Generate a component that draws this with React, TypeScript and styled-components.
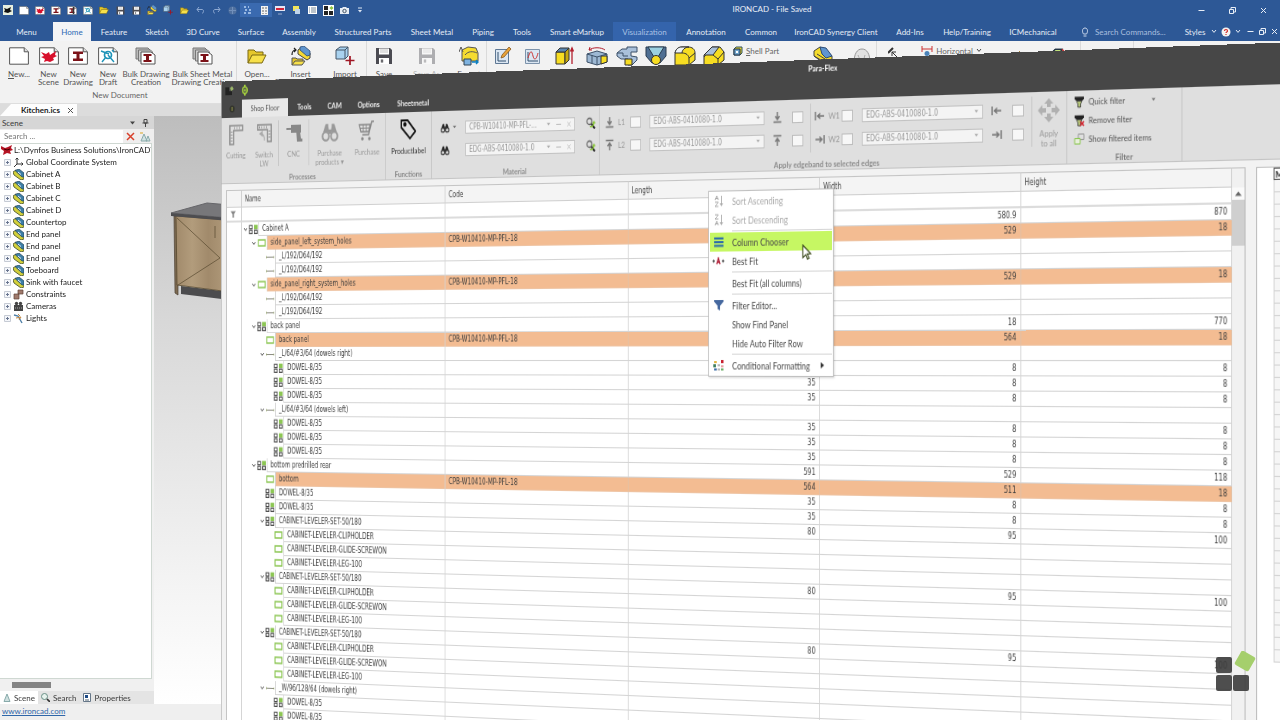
import React from "react";
import styled, { createGlobalStyle, css } from "styled-components";

const UI = `Lato, "Open Sans", "Liberation Sans", sans-serif`;
const GRID = `"DejaVu Sans Condensed", "DejaVu Sans", "Liberation Sans", sans-serif`;

const GlobalStyle = createGlobalStyle`
  *, *::before, *::after { box-sizing: border-box; }
  html, body, #root { height: 100%; }
  body { margin: 0; overflow: hidden; font-family: ${UI}; font-size: 8px; color: #3c3c3c; background: #f1f1f1; }
  button, input, select { font: inherit; color: inherit; margin: 0; padding: 0; border: 0; background: none; border-radius: 0; }
  svg { display: block; flex: none; }
`;

/* ---------- host application ---------- */

const Stage = styled.div`
  position: relative;
  display: flex;
  flex-direction: column;
  height: 100vh;
  overflow: hidden;
  perspective: 6000px;
  perspective-origin: 50% 50%;
`;
const TitleBar = styled.header`
  display: flex;
  align-items: center;
  height: 22px;
  flex: none;
  padding: 0 1px 2px 0;
  background: #2d5896;
  color: #e9eef6;
`;
const QuickTools = styled.div`
  display: flex;
  align-items: center;
`;
const QuickButton = styled.button<{ $on?: boolean }>`
  display: flex;
  justify-content: center;
  align-items: center;
  width: 16px;
  height: 14px;
  background: ${(p) => (p.$on ? "#3a6ab0" : "none")};
`;
const AppTitle = styled.div`
  flex: 1;
  text-align: center;
  line-height: 12px;
  padding: 0 10px 3px 0;
`;
const WindowButton = styled.button`
  display: flex;
  justify-content: center;
  align-items: center;
  width: 31px;
  height: 18px;
`;
const MenuBar = styled.nav`
  display: flex;
  height: 19px;
  flex: none;
  background: #2d5896;
`;
const MenuTab = styled.button<{ $w: number; $kind?: "active" | "lit" }>`
  width: ${(p) => p.$w}px;
  flex: none;
  white-space: nowrap;
  color: #e4ebf5;
  ${(p) => p.$kind === "active" && css`background: #f3f4f6; color: #2c68b4;`}
  ${(p) => p.$kind === "lit" && css`background: #3464ac; color: #a9c0e4;`}
`;
const CommandSearch = styled.label`
  display: flex;
  align-items: center;
  gap: 6px;
  padding-left: 15px;
  flex: 1;
  input { width: 80px; color: #a9bfdf; }
  input::placeholder { color: #a9bfdf; opacity: 1; }
`;
const MenuBarEnd = styled.div`
  display: flex;
  align-items: center;
  color: #e4ebf5;
  button { display: flex; justify-content: center; align-items: center; width: 12px; height: 18px; }
  button:first-child { width: 26px; }
`;
const HostRibbon = styled.div`
  display: flex;
  height: 63px;
  flex: none;
  background: #f2f2f2;
  border-bottom: 1px solid #dedede;
`;
const HostGroup = styled.section<{ $pad?: number; $end?: number }>`
  display: flex;
  flex-direction: column;
  flex: none;
  padding-left: ${(p) => p.$pad ?? 0}px;
  padding-right: ${(p) => p.$end ?? 0}px;
  border-right: 1px solid #dadada;
`;
const HostRow = styled.div`
  display: flex;
  flex: 1;
`;
const HostCaption = styled.div`
  height: 15px;
  line-height: 15px;
  text-align: center;
  color: #666;
`;
const HostButton = styled.button<{ $w: number; $off?: boolean }>`
  display: flex;
  flex-direction: column;
  align-items: center;
  width: ${(p) => p.$w}px;
  padding-top: 5px;
  line-height: 8px;
  color: #555;
  opacity: ${(p) => (p.$off ? 0.4 : 1)};
  svg { height: 20px; }
  span { margin-top: 4px; white-space: nowrap; }
`;
const HostSmall = styled.button<{ $before: number; $after?: number }>`
  display: flex;
  align-items: center;
  gap: 3px;
  height: 19px;
  padding: 0 ${(p) => p.$after ?? 0}px 0 ${(p) => p.$before}px;
  white-space: nowrap;
  color: #666;
`;
const DocTabs = styled.div`
  display: flex;
  height: 12px;
  flex: none;
  background: #dcdcdc;
`;
const DocTab = styled.button`
  display: flex;
  align-items: center;
  gap: 7px;
  width: 77px;
  padding-left: 21px;
  font-weight: 700;
  color: #222;
  background: #fdfdfd;
  clip-path: polygon(11px 0, 100% 0, 100% 100%, 0 100%);
`;
const Main = styled.div`
  display: flex;
  flex: 1;
  min-height: 0;
`;
const ScenePanel = styled.aside`
  display: flex;
  flex-direction: column;
  width: 154px;
  flex: none;
  background: #f0f0f0;
`;
const PanelHead = styled.div`
  display: flex;
  align-items: center;
  justify-content: space-between;
  height: 13px;
  padding: 0 5px 0 2px;
  background: #d6d6d6;
  div { display: flex; gap: 6px; align-items: center; }
`;
const SceneSearch = styled.div`
  display: flex;
  align-items: center;
  height: 14px;
  background: #efeeee;
  input { width: 123px; height: 13px; padding-left: 4px; background: #fff; }
  input::placeholder { color: #777; opacity: 1; }
  button { display: flex; justify-content: center; align-items: center; width: 15px; height: 14px; }
`;
const SceneTree = styled.ul`
  flex: 1;
  margin: 0 2px 0 0;
  padding: 0 0 0 1px;
  list-style: none;
  background: #fff;
  border: 1px solid #cfd8d2;
  border-left: 0;
  overflow: hidden;
`;
const SceneItem = styled.li<{ $root?: boolean }>`
  display: flex;
  align-items: center;
  gap: ${(p) => (p.$root ? 1 : 2)}px;
  height: 12px;
  padding-left: ${(p) => (p.$root ? 0 : 3)}px;
  white-space: nowrap;
  color: #222;
`;
const HScroll = styled.div`
  height: 12px;
  padding: 3px 12px;
  &::before { content: ""; display: block; width: 39px; height: 6px; background: #848484; }
`;
const PanelTabs = styled.div`
  display: flex;
  height: 13px;
  background: #e4e4e4;
`;
const PanelTab = styled.button<{ $on?: boolean }>`
  display: flex;
  align-items: center;
  gap: 3px;
  padding: 0 3px;
  background: ${(p) => (p.$on ? "#fff" : "none")};
`;
const Viewport = styled.div`
  flex: 1;
  background: linear-gradient(#bdbdbd, #d8d8d8 35%, #f4f4f4 80%, #fff);
  padding-top: 84px;
  padding-left: 16px;
`;
const StatusBar = styled.footer`
  height: 16px;
  flex: none;
  padding-left: 2px;
  line-height: 15px;
  background: #efefef;
  a { color: #2f66a8; }
`;

/* ---------- tilted Para-Flex window ---------- */

const FlexWindow = styled.section`
  position: absolute;
  z-index: 2;
  left: 189px;
  right: -180px;
  top: 78px;
  bottom: -30px;
  display: flex;
  flex-direction: column;
  background: #f2f2f2;
  border-left: 1px solid #b5b5b5;
  transform-origin: 131px 50%;
  transform: rotateY(-37deg);
  overflow: hidden;
`;
const FlexTitle = styled.header`
  display: flex;
  align-items: center;
  height: 19px;
  flex: none;
  background: #474747;
  color: #fff;
  font-weight: 700;
  padding-left: 4px;
  h1 { flex: 1; margin: 0; padding: 0 0 4px 182px; text-align: center; font-size: 8px; }
`;
const FlexTabs = styled.nav`
  display: flex;
  height: 18px;
  flex: none;
  background: #474747;
`;
const FlexTab = styled.button<{ $w: number; $on?: boolean }>`
  width: ${(p) => p.$w}px;
  display: flex;
  justify-content: center;
  align-items: center;
  font-weight: ${(p) => (p.$on ? 400 : 700)};
  color: ${(p) => (p.$on ? "#555" : "#f0f0f0")};
  background: ${(p) => (p.$on ? "#e9e9e9" : "none")};
`;
const FlexRibbon = styled.div`
  display: flex;
  height: 67px;
  flex: none;
  background: #dfdfdf;
  border-bottom: 1px solid #c4c4c4;
`;
const FlexGroup = styled.section<{ $w: number }>`
  display: flex;
  flex-direction: column;
  width: ${(p) => p.$w}px;
  flex: none;
  border-right: 1px solid #c6c6c6;
`;
const GroupBody = styled.div`
  display: flex;
  flex: 1;
`;
const GroupLabel = styled.div<{ $plain?: boolean }>`
  height: 9px;
  line-height: 9px;
  text-align: center;
  font-weight: 700;
  color: ${(p) => (p.$plain ? "#777" : "#8b8b8b")};
`;
const BigTool = styled.button<{ $w: number; $live?: boolean }>`
  display: flex;
  flex-direction: column;
  align-items: center;
  gap: 6px;
  width: ${(p) => p.$w}px;
  padding-top: 6px;
  line-height: 9px;
  color: ${(p) => (p.$live ? "#333" : "#999")};
  span { white-space: nowrap; height: 18px; }
`;
const Rule = styled.i`
  width: 1px;
  margin: 4px 0 7px;
  background: #c6c6c6;
`;
const MaterialGrid = styled.div`
  display: grid;
  grid-template-columns: 20px 16px 146px 18px;
  grid-auto-rows: 22px;
  align-content: start;
  align-items: center;
  padding: 5px 0 0 6px;
  button { display: flex; justify-content: center; }
`;
const Lookup = styled.div`
  display: flex;
  align-items: center;
  gap: 7px;
  width: 136px;
  height: 13px;
  padding: 0 4px;
  color: #999;
  background: #f4f4f4;
  border: 1px solid #c2c2c2;
  font-family: ${GRID};
  input { flex: 1; min-width: 0; height: 11px; }
`;
const EdgeGrid = styled.div<{ $pad: number }>`
  display: grid;
  grid-template-columns: 16px 15px 23px 145px 23px 13px;
  grid-auto-rows: 22px;
  align-content: start;
  align-items: center;
  padding: 5px 8px 0 ${(p) => p.$pad}px;
  color: #999;
`;
const Check = styled.input`
  appearance: none;
  width: 13px;
  height: 11px;
  background: #f7f7f7;
  border: 1px solid #bdbdbd;
`;
const Picker = styled.div`
  display: flex;
  align-items: center;
  width: 136px;
  height: 13px;
  padding-right: 4px;
  background: #f4f4f4;
  border: 1px solid #c2c2c2;
  font-family: ${GRID};
  select { flex: 1; appearance: none; height: 11px; padding-left: 4px; line-height: 11px; color: #999; }
`;
const FilterList = styled.div`
  display: flex;
  flex-direction: column;
  padding: 1px 0 0 7px;
`;
const FilterButton = styled.button`
  display: flex;
  align-items: center;
  gap: 4px;
  height: 17px;
  color: #555;
  svg:last-child:not(:first-child) { margin-left: 24px; }
`;
const FlexBody = styled.div`
  display: flex;
  flex: 1;
  min-height: 0;
  padding: 6px 0 0 6px;
`;
const TableWrap = styled.div`
  flex: 1;
  min-width: 0;
  overflow: hidden;
  background: #fff;
`;
const Table = styled.table`
  width: 100%;
  table-layout: fixed;
  border-collapse: separate;
  border-spacing: 0;
  font-family: ${GRID};
  line-height: 13px;
  border-left: 1px solid #c4c4c4;
`;
const HeadCell = styled.th`
  height: 18px;
  padding: 0 4px;
  font-weight: 400;
  text-align: left;
  color: #444;
  background: #f4f4f4;
  border-top: 1px solid #c4c4c4;
  border-right: 1px solid #cfcfcf;
  border-bottom: 1px solid #cfcfcf;
`;
const FilterCell = styled.td`
  height: 15px;
  padding: 0 5px;
  border-right: 1px solid #d4d4d4;
  border-bottom: 2px solid #dcdcdc;
`;
const Gutter = styled.td`
  padding: 0;
  border-right: 1px solid #d4d4d4;
`;
const NameCell = styled.td`
  height: 14px;
  padding: 0;
  border-right: 1px solid #d4d4d4;
`;
const NameLine = styled.div<{ $level: number }>`
  display: flex;
  height: 14px;
  padding-left: ${(p) => 1 + p.$level * 11}px;
`;
const Mark = styled.span<{ $w: number }>`
  display: flex;
  align-items: center;
  justify-content: center;
  width: ${(p) => p.$w}px;
  flex: none;
`;
const NameText = styled.span<{ $hot?: boolean }>`
  flex: 1;
  padding-left: 4px;
  white-space: nowrap;
  border-left: 1px solid #d4d4d4;
  border-bottom: 1px solid ${(p) => (p.$hot ? "#eec3a2" : "#d4d4d4")};
  background: ${(p) => (p.$hot ? "#f3bc92" : "#fff")};
`;
const DataCell = styled.td<{ $hot?: boolean; $num?: boolean }>`
  height: 14px;
  padding: 0 4px;
  white-space: nowrap;
  text-align: ${(p) => (p.$num ? "right" : "left")};
  background: ${(p) => (p.$hot ? "#f3bc92" : "#fff")};
  border-right: 1px solid ${(p) => (p.$hot ? "#e3c0a4" : "#d4d4d4")};
  border-bottom: 1px solid ${(p) => (p.$hot ? "#eec3a2" : "#d4d4d4")};
`;
const VScroll = styled.div`
  display: flex;
  flex-direction: column;
  width: 14px;
  flex: none;
  background: #f1f1f1;
  border-top: 1px solid #c4c4c4;
  border-right: 1px solid #b8b8b8;
  button { display: flex; align-items: center; justify-content: center; height: 11px; margin-top: 17px; background: #fafafa; }
  i { height: 41px; background: #cfcfcf; }
`;
const SideView = styled.div`
  width: 52px;
  flex: none;
  margin-left: 11px;
  padding-left: 17px;
  background: #fff;
  border-left: 1px solid #b8b8b8;
  border-top: 1px solid #c4c4c4;
`;
const SideHead = styled.div`
  height: 11px;
  line-height: 10px;
  padding-left: 1px;
  font-weight: 700;
  color: #111;
  border: 1px solid #555;
`;
const SideRow = styled.div`
  height: 11px;
  background: #f6f6f6;
  border: 1px solid #d4d4d4;
  border-top: 0;
`;

/* ---------- context menu ---------- */

const Menu = styled.div`
  position: absolute;
  left: 612px;
  top: 121px;
  width: 146px;
  padding: 0 1px 1px;
  font-size: 9px;
  background: #fff;
  border: 1px solid #c0c0c0;
  box-shadow: 1px 1px 2px rgba(0, 0, 0, 0.15);
`;
const MenuItem = styled.button<{ $off?: boolean; $on?: boolean }>`
  display: flex;
  align-items: center;
  width: 100%;
  height: 18px;
  color: ${(p) => (p.$off ? "#a9a9a9" : "#4a4a4a")};
  background: ${(p) => (p.$on ? "#c6f763" : "none")};
  i { display: flex; justify-content: center; width: 20px; margin-right: 6px; }
  span + svg { margin-left: 12px; }
`;
const Separator = styled.hr`
  height: 1px;
  margin: 1px 0 1px 26px;
  border: 0;
  background: #d6d6d6;
`;
const Pointer = styled.svg`
  position: absolute;
  left: 721px;
  top: 173px;
`;
const Watermark = styled.svg`
  position: absolute;
  z-index: 3;
  right: 23px;
  bottom: 28px;
`;

/* ---------- drawings ---------- */

const S = ({ w = 20, h = w, vb, children }: { w?: number; h?: number; vb?: string; children: React.ReactNode }) => (
  <svg width={w} height={h} viewBox={vb ?? `0 0 ${w} ${h}`} fill="none" aria-hidden="true">{children}</svg>
);
const Caret = ({ c = "#777", w = 5 }) => <S w={w} h={4} vb="0 0 6 4"><path d="M0.5 0.5h5L3 3.5z" fill={c} /></S>;
const Chevron = ({ c = "#444" }) => <S w={6} h={5}><path d="M1 1l2 2.4L5 1" stroke={c} strokeWidth="1" /></S>;
const Page = ({ w = 20, children }: { w?: number; children?: React.ReactNode }) => (
  <S w={w} h={Math.round(w * 0.9)} vb="0 0 20 18">
    <path d="M.6.8h14.6l4.2 4v12.4H.6z" fill="#fff" stroke="#555" />
    <path d="M15.2.8v4h4.2" stroke="#555" fill="#ddd" />
    {children}
  </S>
);
const Bat = () => <path d="M2 5l5 2 3-2 1 3 6-4-1 4 2 1-4 2 1 2-4 2-3-1-3 1 1-3-4-2 3-1z" fill="#d8102c" />;
const Beam = () => <path d="M5 4.5h10V7h-3.5v4.5H15V14H5v-2.5h3.5V7H5z" fill="#7c1218" />;
const Draft = () => <g><circle cx="10" cy="8" r="3.5" stroke="#1d93b8" strokeWidth="1.7" /><path d="M3 4l8 3M8 10l-4 5M10 8l6 7M14 3l2 2" stroke="#1d93b8" strokeWidth="1.4" /></g>;
const Bulk = () => (
  <S w={22} h={18}>
    <path d="M1 1h12l2 2v9H1z" fill="#bbb" stroke="#777" /><path d="M3.5 3h12l2 2v9h-14z" fill="#ccc" stroke="#777" />
    <path d="M6 5h10l4 3v9H6z" fill="#fff" stroke="#555" /><path d="M8.5 7h8v2H14v4h2.5v2h-8v-2H11V9H8.5z" fill="#7c1218" />
  </S>
);
const Folder = ({ w = 20 }: { w?: number }) => (
  <S w={w} vb="0 0 20 20"><path d="M1 17V4h6l2 2h7v3" fill="#e5c72c" stroke="#7a6812" /><path d="M1 17l4-8h14l-4 8z" fill="#f7e04a" stroke="#7a6812" /></S>
);
const Blocks = ({ w = 20 }: { w?: number }) => (
  <S w={w} vb="0 0 20 20">
    <path d="M7 4l4-3 8 6v5l-3 2-9-6z" fill="#f4d835" stroke="#444" /><path d="M9 1l4-1 6 5v4l-3 1-7-6z" fill="#5f95cf" stroke="#2c4b74" strokeWidth=".8" />
    <path d="M1 19v-7h4l1 1h6v2" fill="#e5c72c" stroke="#555" /><path d="M1 19l3-4h10l-3 4z" fill="#f7e04a" stroke="#555" />
    <path d="M1 9c0-4 1-5 4-5M3 2l2 2-2 2" stroke="#222" strokeWidth="1.2" />
  </S>
);
const PartBlock = () => (
  <S w={20}>
    <path d="M1 5l6-4 12 9v6l-6 3L1 10z" fill="#f4dc2c" stroke="#444" />
    <path d="M7 1l6 1 6 8-6 2-4-4z" fill="#5f95cf" stroke="#2c4b74" /><path d="M1 10l12 7v2M4 8l8 5" stroke="#444" />
  </S>
);
const ImportIcon = ({ w = 20 }: { w?: number }) => (
  <S w={w} vb="0 0 20 20"><path d="M1 4l4-3h8v9l-3 3H1z" fill="#a9d2ef" stroke="#456" /><path d="M1 4h9v9M10 4l3-3" stroke="#456" /><path d="M15 10v9M10.5 14.5h9" stroke="#a01624" strokeWidth="1.7" /></S>
);
const Disk = ({ w = 18 }: { w?: number }) => (
  <S w={w} vb="0 0 18 18"><path d="M1 1h14l2 2v14H1z" fill="#4b4b52" /><path d="M4 1.5h10v6H4zM4 11h10v6H4z" fill="#fff" /><path d="M6 12.5h2v3H6zM5 3h8M5 5h8" fill="#4b4b52" stroke="#aaa" strokeWidth=".7" /></S>
);
const ExportIcon = () => (
  <S w={20}><path d="M3 4l6-3 8 1 2 5v8H3z" fill="#f6dc30" stroke="#555" /><path d="M6 9c3-4 8-4 12-2" stroke="#555" /><path d="M5 13h7v6H5z" fill="#7fb3e0" stroke="#345" /><path d="M13 16h6m-2-2l2 2-2 2" stroke="#0d7fc1" strokeWidth="1.4" /><path d="M0 6l2-5 2 5" stroke="#555" /></S>
);
const Sketch2D = () => (
  <S w={18} h={20}><path d="M1.5 3.5h13v14h-13z" fill="#dbe6f2" stroke="#5f7894" /><path d="M4 6v9h8" stroke="#33506f" /><path d="M7 12l1-3 7-8 2 2-7 8z" fill="#e8a33a" stroke="#7b4b12" strokeWidth=".7" /></S>
);
const Graph = () => (
  <S w={18} h={20}><path d="M1.5 3.5h14v14h-14z" fill="#dbe6f2" stroke="#7d93ab" /><path d="M4 6v9h10" stroke="#33506f" /><path d="M4 12c3-10 4-6 5-2s3 5 5-3" stroke="#c33" /></S>
);
const Extrude = () => (
  <S w={20}><path d="M2 6v12h9V6z" fill="#f7dd22" stroke="#333" /><path d="M11 6l4-4v12l-4 4z" fill="#c6a90f" stroke="#333" /><path d="M2 6l4-4h9l-4 4z" fill="#5a86b0" stroke="#333" /><path d="M18 18V3m-1.5 2.5L18 2l1.5 3.5" stroke="#b3202e" strokeWidth="1.3" /></S>
);
const Spin = () => (
  <S w={22} h={20}><path d="M1 8l10-3 10 3v8l-10 3-10-3z" fill="#9db8d3" stroke="#3c5068" /><path d="M15 10h6v6l-6 2z" fill="#f7dd22" stroke="#333" /><path d="M1 8l10 3 10-3M11 11v8M6 9v8" stroke="#3c5068" /><path d="M3 4c4-3 12-3 16 0M3 4l1-3M3 4h3" stroke="#b3202e" /></S>
);
const Sweep = () => (
  <S w={22} h={20}><path d="M1 7l5-4h5V1h10v5h-6v4l6 1v3l-5 5h-4v-6H5L1 10z" fill="#a9c0da" stroke="#3c5068" /><path d="M1 7h6v3h5" stroke="#3c5068" /><path d="M9 13h7v6H9z" fill="#f7dd22" stroke="#333" /></S>
);
const Loft = () => (
  <S w={22} h={20}><path d="M1 1h20v9l-6 7H7L1 10z" fill="#4f6f93" stroke="#2b3c50" /><path d="M3 1h16l-6 10H9z" fill="#9bd0e0" stroke="#2b3c50" /><circle cx="11" cy="14" r="4.5" fill="#f7dd22" stroke="#333" /></S>
);
const Blend = ({ flat }: { flat?: boolean }) => (
  <S w={22} h={20}>
    {flat ? (
      <>
        <path d="M9 1h8l4 5v8l-6 5H1v-8z" fill="#f7dd22" stroke="#333" /><path d="M9 1h7l-6 8H1z" fill="#a9c0da" stroke="#333" /><path d="M1 9v2M10 9l5 4 6-7M15 13v6" stroke="#333" />
      </>
    ) : (
      <>
        <path d="M1 8v11h14l6-5V7c0-4-3-6-7-6H8C4 1 1 4 1 8z" fill="#f7dd22" stroke="#333" /><path d="M1 7c1-4 3-6 7-6h7c-4 0-7 3-7 6z" fill="#eef2f5" stroke="#333" /><path d="M8 7c4 0 7 2 7 6v6M15 12l6-5" stroke="#333" />
      </>
    )}
  </S>
);
const Shell = () => <S w={10}><path d="M1 3l2-2h6v6L7 9H1z" fill="#e3cf2b" stroke="#356" /><path d="M1 3h6v6H1z" fill="#6ea2c9" stroke="#234" /><path d="M3 5h2v2H3z" fill="#fff" /></S>;
const Helmet = () => <S w={18}><path d="M1 16c0-9 3-14 8-14s8 5 8 14z" fill="#e2e2e2" stroke="#999" /><path d="M5 8c1 3 2 3 2 8M12 8c-1 3-1 4-1 8M3 12h12" stroke="#aaa" /></S>;
const SmallCube = ({ w = 12 }: { w?: number }) => <S w={w} vb="0 0 12 12"><path d="M1 4l3-3h5v6l-2 4H1z" fill="#d9d33c" stroke="#234" /><path d="M1 4l3-3h5L7 4z" fill="#bfe07a" stroke="#234" /><path d="M9 1l2.5 2.5" stroke="#c33" /></S>;

const quick: React.ReactNode[] = [
  <S w={10}><path d="M0 0h10v10H0z" fill="#e8efdf" /><path d="M1 3l3 1 4-2-1 3 2 1-4 2-4-1 1-2z" fill="#111" /></S>,
  <Page w={10} />, <Page w={10}><Bat /></Page>, <Page w={10}><Beam /></Page>, <Page w={10}><Beam /><path d="M13 2v14" stroke="#333" strokeWidth="3" /></Page>,
  <Page w={10}><Draft /></Page>, <Folder w={10} />, <Disk w={9} />, <Disk w={9} />, <Blocks w={10} />, <ImportIcon w={10} />,
  <Folder w={9} />,
  <S w={9}><path d="M3 1L1 3.5 3 6M1 3.5h5c2 0 2 3 0 4" stroke="#8ea9d2" /></S>,
  <S w={9}><path d="M6 1l2 2.5L6 6M8 3.5H3c-2 0-2 3 0 4" stroke="#8ea9d2" /></S>,
  <S w={9}><circle cx="4.5" cy="4.5" r="4" fill="#51719f" /><path d="M1 4.5h7M4.5 1v7" stroke="#7290bb" /></S>,
  <S w={10}><path d="M1 2h2M5 2h1M2 5h2M6 5h2M1 8h2M5 8h3" stroke="#b8d2f4" strokeWidth="1.5" /></S>,
  <S w={9}><path d="M1 0h7v9H1z" fill="#f3f3f3" /><path d="M3 1v7M6 1v7" stroke="#666" strokeDasharray="2 1" /></S>,
  <S w={10}><path d="M0 1h10v5H0z" fill="#e6e6f4" /><path d="M1 3h8v2H1z" fill="#d2243a" /><path d="M3 9h4" stroke="#9ac" /></S>,
  <S w={10}><path d="M2 1h6v5H2z" fill="#f0e45a" /><path d="M4 4h5v5H4z" fill="#bfd4ea" /></S>,
  <S w={10}><path d="M1 1h9v8H1z" fill="#fff" /><path d="M2 3h7M2 5h7M2 7h7" stroke="#789" strokeDasharray="1 1 6" /></S>,
  <S w={11}><path d="M0 0h11v11H0z" fill="#fff" /><path d="M1 1h4v4H1zM1 6h4v4H1zM6 6h4v4H6z" fill="#222" /><path d="M6.5 3l2-2 2 2-2 2z" fill="#8cc63f" /></S>,
  <S w={9}><path d="M0 2h2l1-1h3l1 1h2v6H0z" fill="#e8eef6" /><circle cx="4.5" cy="5" r="1.7" stroke="#456" /></S>,
  <S w={6}><path d="M1 1h4" stroke="#dfe8f5" /><path d="M1 3h4L3 5.5z" fill="#dfe8f5" /></S>,
];

const WinMin = () => <S w={7}><path d="M0.5 3.5h6" stroke="#e8eef7" /></S>;
const WinRestore = () => <S w={7}><path d="M.5 2.5h4v4h-4zM2 2V.5h4.5V5H5" stroke="#e8eef7" /></S>;
const WinClose = ({ c = "#e8eef7" }) => <S w={7}><path d="M1 1l5 5M6 1L1 6" stroke={c} /></S>;

const PartIcon = () => (
  <S w={11}><path d="M0 3l3-2 8 6v3L8 11 1 6z" fill="#d2cf3a" stroke="#3f4a2a" strokeWidth=".8" /><path d="M2 1.5L6 0l5 4v4L9 8z" fill="#3d7ea6" stroke="#24465c" strokeWidth=".7" /><path d="M5 3l3 2.5" stroke="#e9f0ff" /></S>
);
const sceneIcon = (kind: string) => {
  if (kind === "axes") return <S w={11}><path d="M4 1v6h6M4 7L1 10M8.5 5.5L10 7 8.5 8.5M2.5 2.5L4 1l1.5 1.5" stroke="#333" /></S>;
  if (kind === "constraint") return <S w={11}><path d="M5 1h5v4H5zM1 5h5v5H1z" fill="#a07a6c" stroke="#5f4238" strokeWidth=".7" /></S>;
  if (kind === "camera") return <S w={11}><path d="M1 4h9v6H1z" fill="#444" /><circle cx="3.5" cy="2.5" r="1.7" fill="#444" /><circle cx="7.5" cy="2.5" r="1.7" fill="#444" /><path d="M2 7h7" stroke="#aaa" strokeDasharray="1" /></S>;
  if (kind === "light") return <S w={11}><path d="M1 2l4 1 4 7" stroke="#4f7fa6" strokeWidth="1.4" /><path d="M5 1l2 2M3 5l5-1-2 3" stroke="#c58a42" /></S>;
  return <PartIcon />;
};
const PlusBox = () => <S w={7}><path d="M.5.5h6v6h-6z" fill="#f4f6fa" stroke="#c6cbd4" /><path d="M2 3.5h3M3.5 2v3" stroke="#6a7690" /></S>;

const scene: [string, string][] = [
  ["Global Coordinate System", "axes"], ["Cabinet A", "part"], ["Cabinet B", "part"], ["Cabinet C", "part"], ["Cabinet D", "part"],
  ["Countertop", "part"], ["End panel", "part"], ["End panel", "part"], ["End panel", "part"], ["Toeboard", "part"],
  ["Sink with faucet", "part"], ["Constraints", "constraint"], ["Cameras", "camera"], ["Lights", "light"],
];

const menus: [string, number, ("active" | "lit")?][] = [
  ["Menu", 53], ["Home", 38, "active"], ["Feature", 46], ["Sketch", 40], ["3D Curve", 52], ["Surface", 44], ["Assembly", 52],
  ["Structured Parts", 76], ["Sheet Metal", 62], ["Piping", 40], ["Tools", 38], ["Smart eMarkup", 72], ["Visualization", 63, "lit"],
  ["Annotation", 60], ["Common", 50], ["IronCAD Synergy Client", 100], ["Add-Ins", 48], ["Help/Training", 66], ["ICMechanical", 66],
];

const Binoculars = ({ c = "#999", w = 20 }) => (
  <S w={w} vb="0 0 20 20"><circle cx="5" cy="14" r="3.8" stroke={c} strokeWidth="2" /><circle cx="15" cy="14" r="3.8" stroke={c} strokeWidth="2" /><path d="M5 3h3v2l1 5H2l2-5zM12 3h3l1 2 2 5h-7l1-5z" fill={c} /><path d="M8 8h4v4H8z" fill={c} /></S>
);
const Magnifier = () => <S w={12} h={12}><circle cx="4.5" cy="4.5" r="3" stroke="#666" strokeWidth="1.3" /><path d="M7 7l4 4.5" stroke="#222" strokeWidth="2" /><path d="M5 9.5c3 1 5-1 5-4M8.500 6.500L10 5l1.500 1.500" stroke="#8cc63f" strokeWidth="1.3" /></S>;
type Dir = "down" | "up" | "left" | "right";
const EdgeArrow = ({ dir }: { dir: Dir }) => (
  <S w={12} h={12}>
    {dir === "down" && <path d="M6 1v6M3.5 5L6 8l2.5-3M1.5 10.5h9" stroke="#777" strokeWidth="1.5" />}
    {dir === "up" && <path d="M6 11V5M3.5 7L6 4l2.5 3M1.5 1.5h9" stroke="#777" strokeWidth="1.5" />}
    {dir === "left" && <path d="M11 6H4M6.5 3.5L3.5 6l3 2.5M1 2v8" stroke="#777" strokeWidth="1.5" />}
    {dir === "right" && <path d="M1 6h7M5.5 3.5l3 2.5-3 2.5M11 2v8" stroke="#777" strokeWidth="1.5" />}
  </S>
);
const Funnel = ({ x }: { x?: boolean }) => (
  <S w={12} h={12}><path d="M1 1.5h10v2L9.5 5h-7L1 3.5z" fill="#222" /><path d="M3 5.5h6L7.5 8v3h-3V8z" fill="#b6c77a" stroke="#333" strokeWidth=".8" />{x && <path d="M7 7l4 4M11 7l-4 4" stroke="#d3232e" strokeWidth="1.5" />}</S>
);

const Comp = () => <S w={13} h={10} vb="0 0 12 9"><path d="M1 1h3.5v3H1zM1 5.5h3.5v3H1zM7 5.5h3.5v3H7z" fill="#fff" stroke="#4a4a4a" /><path d="M6.5.5h4.5v4H6.5z" fill="#8cc653" /></S>;
const Rect = () => <S w={11} h={8}><path d="M1 1h9v6H1z" fill="#fff" stroke="#8cc653" strokeWidth="1.3" /></S>;
const Dash = () => <S w={11} h={5}><path d="M1 2.5h9" stroke="#8a8a80" /><path d="M.5 1.5v2M10.5 1.5v2" stroke="#9aab70" /></S>;

type Row = { n: string; l: number; k: "c" | "r" | "d"; o?: boolean; code?: string; v?: [string, string, string] };
const CODE = "CPB-W10410-MP-PFL-18";
const leaf = (n: string, l: number, k: Row["k"], v?: Row["v"]): Row => ({ n, l, k, v });
const dowel = (l: number, length = "35") => leaf("DOWEL-8/35", l, "c", [length, "8", "8"]);
const leveler = (): Row[] => [
  { n: "CABINET-LEVELER-SET-50/180", l: 2, k: "c", o: true, v: ["80", "95", "100"] },
  leaf("CABINET-LEVELER-CLIPHOLDER", 3, "r"), leaf("CABINET-LEVELER-GLIDE-SCREWON", 3, "r"), leaf("CABINET-LEVELER-LEG-100", 3, "r"),
];
const rows: Row[] = [
  { n: "Cabinet A", l: 0, k: "c", o: true, v: ["", "580.9", "870"] },
  { n: "side_panel_left_system_holes", l: 1, k: "r", o: true, code: CODE, v: ["", "529", "18"] },
  leaf("_L/192/D64/192", 2, "d"), leaf("_L/192/D64/192", 2, "d"),
  { n: "side_panel_right_system_holes", l: 1, k: "r", o: true, code: CODE, v: ["", "529", "18"] },
  leaf("_L/192/D64/192", 2, "d"), leaf("_L/192/D64/192", 2, "d"),
  { n: "back panel", l: 1, k: "c", o: true, v: ["", "18", "770"] },
  { n: "back panel", l: 2, k: "r", code: CODE, v: ["", "564", "18"] },
  { n: "_L/64/#3/64 (dowels right)", l: 2, k: "d", o: true }, dowel(3, ""), dowel(3), dowel(3),
  { n: "_L/64/#3/64 (dowels left)", l: 2, k: "d", o: true }, dowel(3), dowel(3), dowel(3),
  { n: "bottom predrilled rear", l: 1, k: "c", o: true, v: ["591", "529", "118"] },
  { n: "bottom", l: 2, k: "r", code: CODE, v: ["564", "511", "18"] },
  dowel(2), dowel(2), ...leveler(), ...leveler(), ...leveler(),
  { n: "_W/96/128/64 (dowels right)", l: 2, k: "d", o: true }, leaf("DOWEL-8/35", 3, "c"), leaf("DOWEL-8/35", 3, "c"),
];

const EdgeLine = ({ name, a, b }: { name: string; a: Dir; b: Dir }) => (
  <>
    <EdgeArrow dir={a} />
    <label htmlFor={`edge-${name}`}>{name}</label>
    <Check type="checkbox" id={`edge-${name}`} />
    <Picker>
      <select aria-label={`${name} edgeband`}><option>EDG-ABS-0410080-1.0</option></select>
      <Caret c="#aaa" />
    </Picker>
    <EdgeArrow dir={b} />
    <Check type="checkbox" aria-label={`${name} apply`} />
  </>
);

const LookupField = ({ label, value }: { label: string; value: string }) => (
  <Lookup>
    <input aria-label={label} defaultValue={value} />
    <Caret c="#aaa" />
    <S w={6} h={3}><path d="M0 1.5h6" stroke="#bbb" /></S>
    <S w={5}><path d="M.5.5l4 4M4.5.5l-4 4" stroke="#bbb" /></S>
  </Lookup>
);

const ParaFlex = () => (
  <FlexWindow aria-label="Para-Flex">
    <FlexTitle>
      <S w={13} h={11}><path d="M1 2h5v4H1zM1 6h5v4H1zM6 6h4v4H6z" fill="#222" /><path d="M7 3l3-2 2 3-3 2z" fill="#9db86a" /></S>
      <S w={22} h={11}><circle cx="14" cy="5.5" r="3.2" stroke="#a4cf3e" strokeWidth="1.6" /><path d="M14 0v2M14 9v2M12.5 5.5h3" stroke="#a4cf3e" strokeWidth="2" /></S>
      <h1>Para-Flex</h1>
    </FlexTitle>
    <FlexTabs>
      <FlexTab $w={27} aria-label="File"><S w={8}><circle cx="4" cy="4" r="3.5" fill="#33352c" /><path d="M4 2v4" stroke="#9a9a50" /></S></FlexTab>
      <FlexTab $w={61} $on>Shop Floor</FlexTab>
      <FlexTab $w={43}>Tools</FlexTab>
      <FlexTab $w={36}>CAM</FlexTab>
      <FlexTab $w={52}>Options</FlexTab>
      <FlexTab $w={62}>Sheetmetal</FlexTab>
    </FlexTabs>
    <FlexRibbon>
      <FlexGroup $w={215}>
        <GroupBody>
          <BigTool $w={38}><S w={20} h={22}><path d="M2 2h17v5H7v14H2z" stroke="#8d8d8d" strokeWidth="1.7" /><path d="M8 4.5h9M4.5 8v11" stroke="#8d8d8d" strokeDasharray="1 2" strokeWidth="2" /></S><span>Cutting</span></BigTool>
          <BigTool $w={37}><S w={22}><path d="M2 2h18v17h-5V7H2z" stroke="#8d8d8d" strokeWidth="1.7" /><path d="M4 4.5h11M17.5 8v9" stroke="#8d8d8d" strokeDasharray="1 2" strokeWidth="2" /><path d="M6 11c4 0 5 3 5 7M5 11l3-2v4z" stroke="#aaa" strokeWidth="1.3" /></S><span>Switch<br />LW</span></BigTool>
          <Rule />
          <BigTool $w={39}><S w={22}><path d="M1 7h6" stroke="#888" strokeWidth="2" /><path d="M7 3h13v8H7z" fill="#888" /><path d="M14 10h5l1 7h2v3h-7z" fill="#888" /></S><span>CNC</span></BigTool>
          <Rule />
          <BigTool $w={53}><Binoculars w={22} /><span>Purchase<br />products ▾</span></BigTool>
          <BigTool $w={44}><S w={22}><path d="M20 2h-3l-4 13H5" stroke="#888" strokeWidth="1.7" /><path d="M1 5h14l-2 7H3z" stroke="#888" strokeWidth="1.3" /><path d="M2 8.5h12M6 5v7M10 5v7" stroke="#888" /><circle cx="5" cy="19" r="1.7" fill="#888" /><circle cx="14" cy="19" r="1.7" fill="#888" /></S><span>Purchase</span></BigTool>
        </GroupBody>
        <GroupLabel>Processes</GroupLabel>
      </FlexGroup>
      <FlexGroup $w={59}>
        <GroupBody><BigTool $w={58} $live><S w={22}><path d="M2 2h8l10 11-7 7L2 9z" stroke="#111" strokeWidth="1.9" /><circle cx="6.5" cy="6" r="2.2" fill="#111" /></S><span>Productlabel</span></BigTool></GroupBody>
        <GroupLabel>Functions</GroupLabel>
      </FlexGroup>
      <FlexGroup $w={208}>
        <GroupBody>
          <MaterialGrid>
            <button aria-label="Find material"><Binoculars c="#222" w={11} /></button>
            <Caret />
            <LookupField label="Panel material" value="CPB-W10410-MP-PFL-..." />
            <button aria-label="Search panel"><Magnifier /></button>
            <button aria-label="Find edgeband"><Binoculars c="#222" w={11} /></button>
            <span />
            <LookupField label="Edge material" value="EDG-ABS-0410080-1.0" />
            <button aria-label="Search edgeband"><Magnifier /></button>
          </MaterialGrid>
        </GroupBody>
        <GroupLabel>Material</GroupLabel>
      </FlexGroup>
      <FlexGroup $w={536}>
        <GroupBody>
          <EdgeGrid $pad={6}><EdgeLine name="L1" a="down" b="down" /><EdgeLine name="L2" a="up" b="up" /></EdgeGrid>
          <Rule />
          <EdgeGrid $pad={4}><EdgeLine name="W1" a="left" b="left" /><EdgeLine name="W2" a="right" b="right" /></EdgeGrid>
          <Rule />
          <BigTool $w={36}><S w={24} h={22}><path d="M12 0l5 5h-3v3h-4V5H7zM12 22l5-5h-3v-3h-4v3H7zM0 11l5-5v3h4v4H5v3zM24 11l-5-5v3h-4v4h4v3z" fill="#b0b0b0" /></S><span>Apply<br />to all</span></BigTool>
        </GroupBody>
        <GroupLabel>Apply edgeband to selected edges</GroupLabel>
      </FlexGroup>
      <FlexGroup $w={123}>
        <GroupBody>
          <FilterList>
            <FilterButton><Funnel />Quick filter<Caret /></FilterButton>
            <FilterButton><Funnel x />Remove filter</FilterButton>
            <FilterButton><S w={12}><path d="M5 1.5h6v5H5z" stroke="#999" /><path d="M1 5.5h6v5H1z" fill="#e8efdc" stroke="#8cc653" /></S>Show filtered items</FilterButton>
          </FilterList>
        </GroupBody>
        <GroupLabel $plain>Filter</GroupLabel>
      </FlexGroup>
    </FlexRibbon>
    <FlexBody>
      <TableWrap>
        <Table>
          <colgroup><col width="20" /><col width="264" /><col /><col /><col /><col /></colgroup>
          <thead>
            <tr><HeadCell aria-label="Filter" />{["Name", "Code", "Length", "Width", "Height"].map((h) => <HeadCell key={h}>{h}</HeadCell>)}</tr>
          </thead>
          <tbody>
            <tr>
              <FilterCell><S w={7} h={7}><path d="M0 .5h7L4.5 3.5V7h-2V3.5z" fill="#888" /></S></FilterCell>
              <FilterCell /><FilterCell /><FilterCell /><FilterCell /><FilterCell />
            </tr>
            {rows.map((r, i) => {
              const hot = !!r.code;
              return (
                <tr key={i}>
                  <Gutter />
                  <NameCell>
                    <NameLine $level={r.l}>
                      <Mark $w={8}>{r.o && <Chevron />}</Mark>
                      <Mark $w={13}>{r.k === "c" ? <Comp /> : r.k === "r" ? <Rect /> : <Dash />}</Mark>
                      <NameText $hot={hot}>{r.n}</NameText>
                    </NameLine>
                  </NameCell>
                  <DataCell $hot={hot}>{r.code}</DataCell>
                  {[0, 1, 2].map((c) => <DataCell key={c} $hot={hot} $num>{r.v?.[c]}</DataCell>)}
                </tr>
              );
            })}
          </tbody>
        </Table>
      </TableWrap>
      <VScroll><button aria-label="Scroll up"><S w={7} h={5}><path d="M0 4.5h7L3.5.5z" fill="#666" /></S></button><i /></VScroll>
      <SideView><SideHead>M</SideHead>{Array.from({ length: 39 }, (_, i) => <SideRow key={i} />)}</SideView>
    </FlexBody>
    <Menu role="menu">
      <MenuItem $off role="menuitem"><i><S w={11} h={12}><path d="M1 5l2-4 2 4M1.5 3.5h3M1 7h4L1 11h4M8.5 1v9M7 8l1.5 2.5L10 8" stroke="#aaa" /></S></i><span>Sort Ascending</span></MenuItem>
      <MenuItem $off role="menuitem"><i><S w={11} h={12}><path d="M1 1h4L1 5h4M1 11l2-4 2 4M1.5 9.5h3M8.5 1v9M7 8l1.5 2.5L10 8" stroke="#aaa" /></S></i><span>Sort Descending</span></MenuItem>
      <Separator />
      <MenuItem $on role="menuitem"><i><S w={11} h={10}><path d="M0 1.5h11M0 5h11M0 8.5h11" stroke="#2b6cab" strokeWidth="2" /></S></i><span>Column Chooser</span></MenuItem>
      <MenuItem role="menuitem"><i><S w={14} h={8}><path d="M5 7l2-6 2 6M5.5 5h3" stroke="#b01c35" strokeWidth="1.3" /><path d="M0 4h3M14 4h-3M1.5 2.5v3M12.5 2.5v3" stroke="#444" /></S></i><span>Best Fit</span></MenuItem>
      <Separator />
      <MenuItem role="menuitem"><i /><span>Best Fit (all columns)</span></MenuItem>
      <Separator />
      <MenuItem role="menuitem"><i><S w={11} h={10}><path d="M0 0h11v1.5L7 5.5V10L4 8.5v-3L0 1.5z" fill="#45689f" /></S></i><span>Filter Editor...</span></MenuItem>
      <MenuItem role="menuitem"><i /><span>Show Find Panel</span></MenuItem>
      <MenuItem role="menuitem"><i /><span>Hide Auto Filter Row</span></MenuItem>
      <Separator />
      <MenuItem role="menuitem"><i><S w={13} h={10}><path d="M1 1h3v2H1z" fill="#e3b23c" /><path d="M9 0h3v3H9z" fill="#c8202f" /><path d="M0 4h3v3H0z" fill="#3d7c5b" /><path d="M5 4h3v2H5zM5 8h3v2H5z" fill="#b9b9b9" /><path d="M9 5h3v2H9z" fill="#e7a3a3" /><path d="M1 8h3v2H1z" fill="#3f6fa8" /><path d="M9 8h3v2H9z" fill="#6fb06a" /></S></i><span>Conditional Formatting</span><S w={5} h={6}><path d="M0 0l4 3-4 3z" fill="#333" /></S></MenuItem>
    </Menu>
    <Pointer width="12" height="15" viewBox="0 0 12 15" fill="none" aria-hidden="true"><path d="M1.500 1l9 8-4 .3 2.200 4-1.900.9-2-4.100-3.300 2.600z" fill="#fff" stroke="#3c4a1c" strokeWidth="1.2" /></Pointer>
  </FlexWindow>
);

export default function App() {
  return (
    <Stage>
      <GlobalStyle />
      <TitleBar>
        <QuickTools>{quick.map((q, i) => <QuickButton key={i} $on={i === 15 || i === 16} aria-label={`Quick tool ${i + 1}`}>{q}</QuickButton>)}</QuickTools>
        <AppTitle>IRONCAD - File Saved</AppTitle>
        <WindowButton aria-label="Minimize"><WinMin /></WindowButton>
        <WindowButton aria-label="Restore"><WinRestore /></WindowButton>
        <WindowButton aria-label="Close"><WinClose /></WindowButton>
      </TitleBar>
      <MenuBar>
        {menus.map(([t, w, k]) => <MenuTab key={t} $w={w} $kind={k}>{t}</MenuTab>)}
        <CommandSearch>
          <S w={8} h={10}><path d="M2.5 7C1 5 1 1 4 1s3 4 1.5 6zM2.5 9h3" stroke="#c9d7ec" /></S>
          <input aria-label="Search commands" placeholder="Search Commands..." />
        </CommandSearch>
        <MenuBarEnd>
          <button>Styles</button>
          <button aria-label="Styles list"><Chevron c="#e4ebf5" /></button>
          <button aria-label="Help"><S w={10}><circle cx="5" cy="5" r="4.5" fill="#f2f2f2" /><path d="M3.5 4c0-2 3-2 3 0 0 1-1.5 1-1.5 2M5 7v1" stroke="#d02a2a" strokeWidth="1.2" /></S></button>
          <button aria-label="Help list"><Chevron c="#e4ebf5" /></button>
          <button aria-label="Minimize document"><WinMin /></button>
          <button aria-label="Restore document"><WinRestore /></button>
          <button aria-label="Close document"><WinClose /></button>
        </MenuBarEnd>
      </MenuBar>
      <HostRibbon>
        <HostGroup $pad={4}>
          <HostRow>
            <HostButton $w={30}><Page /><span><u>N</u>ew...</span></HostButton>
            <HostButton $w={29}><Page><Bat /></Page><span>New<br />Scene</span></HostButton>
            <HostButton $w={30}><Page><Beam /></Page><span>New<br />Drawing</span></HostButton>
            <HostButton $w={30}><Page><Draft /></Page><span>New<br />Draft</span></HostButton>
            <HostButton $w={46}><Bulk /><span>Bulk Drawing<br />Creation</span></HostButton>
            <HostButton $w={67}><Bulk /><span>Bulk Sheet Metal<br />Drawing Creation</span></HostButton>
          </HostRow>
          <HostCaption>New Document</HostCaption>
        </HostGroup>
        <HostGroup>
          <HostRow>
            <HostButton $w={40}><Folder /><span>Open...</span></HostButton>
            <HostButton $w={47}><Blocks /><span>Insert<br />Part/Assembly</span></HostButton>
            <HostButton $w={42}><ImportIcon /><span>Import</span></HostButton>
          </HostRow>
        </HostGroup>
        <HostGroup>
          <HostRow>
            <HostButton $w={34}><Disk /><span>Save</span></HostButton>
            <HostButton $w={51} $off><Disk /><span>Save As</span></HostButton>
            <HostButton $w={34}><ExportIcon /><span>Export</span></HostButton>
          </HostRow>
        </HostGroup>
        <HostGroup $end={5}>
          <HostRow>
            <HostButton $w={32}><Sketch2D /><span>2D</span></HostButton>
            <HostButton $w={28}><Graph /></HostButton>
            <HostButton $w={34}><Extrude /></HostButton>
            <HostButton $w={31}><Spin /></HostButton>
            <HostButton $w={30}><Sweep /></HostButton>
            <HostButton $w={28}><Loft /></HostButton>
            <HostButton $w={29}><Blend /></HostButton>
            <HostButton $w={30}><Blend flat /></HostButton>
            <HostSmall $before={4} $after={14}><Shell /><span><u>S</u>hell Part</span></HostSmall>
            <HostButton $w={60}><PartBlock /></HostButton>
            <HostButton $w={18}><Helmet /></HostButton>
          </HostRow>
        </HostGroup>
        <HostGroup $pad={7} $end={12}>
          <HostRow>
            <HostButton $w={24}><S w={16}><path d="M0 5l5-5" stroke="#333" strokeWidth="2" /><path d="M4 4l12 12M4 4v4M4 4h4" stroke="#333" /></S></HostButton>
            <HostSmall $before={13}><S w={12} h={10}><path d="M1 0v6M11 0v6M1 3h10" stroke="#c33" /><circle cx="6" cy="7.5" r="2.5" fill="#4a82b8" /></S><u>Horizontal</u><Chevron /></HostSmall>
            <HostButton $w={66}><S w={10}><path d="M1 10L10 0v10z" fill="#e6ad3a" stroke="#96691a" strokeWidth=".7" /></S></HostButton>
            <HostButton $w={20}><SmallCube w={16} /></HostButton>
          </HostRow>
        </HostGroup>
        <HostGroup><HostRow><HostButton $w={52}><S w={14}><path d="M.5.5h13v13H.5z" fill="#e6eef7" stroke="#7893b0" /><path d="M3 3h8v5H3z" fill="#5a8cc0" /></S></HostButton></HostRow></HostGroup>
      </HostRibbon>
      <DocTabs><DocTab>Kitchen.ics <WinClose c="#555" /></DocTab></DocTabs>
      <Main>
        <ScenePanel>
          <PanelHead>Scene<div><Caret c="#444" w={7} /><S w={7} h={8}><path d="M2 .5h3V4H2zM.5 4h6M3.5 4v4" stroke="#444" /></S></div></PanelHead>
          <SceneSearch>
            <input aria-label="Search scene" placeholder="Search ..." />
            <button aria-label="Clear"><S w={9}><path d="M1 1l7 7M8 1L1 8" stroke="#d8402c" strokeWidth="1.5" /></S></button>
            <button aria-label="Scene filter"><S w={11}><path d="M1 10l3-7 3 7zM6 10l2-5 2 5z" fill="#d3e2e2" stroke="#8aa" /><path d="M0 2h3" stroke="#d9a520" /></S></button>
          </SceneSearch>
          <SceneTree>
            <SceneItem $root><S w={12}><path d="M0 2l4 2 3-1 4-2-1 3 2 2-3 1 1 3-4-1-4 2 1-4-3-2z" fill="#b51424" /><path d="M3 5l3 1 3-1" stroke="#400" /></S>L:\Dynfos Business Solutions\IronCAD\</SceneItem>
            {scene.map(([t, k], i) => <SceneItem key={i}><PlusBox />{sceneIcon(k)}<span>{t}</span></SceneItem>)}
          </SceneTree>
          <HScroll />
          <PanelTabs>
            <PanelTab $on><S w={8} h={9}><path d="M1 8.5L4 1l3 7.5z" fill="#cfe0e0" stroke="#8aa" /></S>Scene</PanelTab>
            <PanelTab><S w={9}><circle cx="3.5" cy="3.5" r="3" fill="#e7f3ee" stroke="#6a8f86" /><path d="M6 6l3 3" stroke="#333" strokeWidth="1.7" /></S>Search</PanelTab>
            <PanelTab><S w={9}><path d="M.5.5h7v8h-7z" fill="#fff" stroke="#678" /><path d="M2 2h3v3H2z" fill="#1d4a86" /><path d="M2 7h4" stroke="#567" /></S>Properties</PanelTab>
          </PanelTabs>
        </ScenePanel>
        <Viewport>
          <svg width="60" height="104" viewBox="170 200 60 104" fill="none" aria-hidden="true">
            <defs><linearGradient id="wood"><stop offset="0" stopColor="#a18a6b" /><stop offset=".3" stopColor="#b29c7c" /><stop offset=".6" stopColor="#a18a6b" /><stop offset="1" stopColor="#b39d7d" /></linearGradient></defs>
            <path d="M181 286l49 6v8l-49-6z" fill="#4c4c4e" />
            <path d="M174 216l4 1v78l-3-2z" fill="#7d6a52" stroke="#4c4032" strokeWidth=".7" />
            <path d="M176 216l54 4v72l-53-7z" fill="url(#wood)" stroke="#57492f" strokeWidth=".8" />
            <path d="M171 213l36-10 23 2v13l-59-5z" fill="#77777a" stroke="#66666a" /><path d="M171 213l59 5v3l-59-5z" fill="#4d4d50" />
            <path d="M177 218l43 40-42 27M215 226v12" stroke="#57492f" strokeWidth=".7" />
          </svg>
        </Viewport>
      </Main>
      <StatusBar><a href="https://www.ironcad.com">www.ironcad.com</a></StatusBar>
      <ParaFlex />
      <Watermark width="41" height="41" viewBox="0 0 41 41" aria-hidden="true">
        <g fill="#3b3b3b" fillOpacity=".9"><rect x="0" y="6" width="16" height="16" rx="2" /><rect x="0" y="24" width="16" height="16" rx="2" /><rect x="17" y="24" width="16" height="16" rx="2" /></g>
        <rect x="21" y="2" width="16" height="16" rx="2" fill="#a5cf6c" transform="rotate(30 29 10)" />
      </Watermark>
    </Stage>
  );
}
